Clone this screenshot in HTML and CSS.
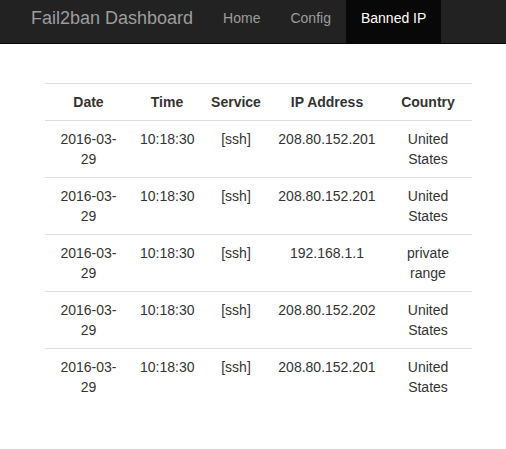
FILE: index.html
```html
<!DOCTYPE html>
<html>
<head>
<meta charset="utf-8">
<title>Fail2ban Dashboard</title>
<link rel="stylesheet" href="styles.css">
</head>
<body>
<nav class="navbar">
  <a class="brand" href="#">Fail2ban Dashboard</a>
  <ul class="nav">
    <li><a href="#">Home</a></li>
    <li><a href="#">Config</a></li>
    <li class="active"><a href="#">Banned IP</a></li>
  </ul>
</nav>
<main class="content">
  <table class="bans">
    <thead>
      <tr><th class="col-date">Date</th><th class="col-time">Time</th><th class="col-service">Service</th><th class="col-ip">IP Address</th><th class="col-country">Country</th></tr>
    </thead>
    <tbody>
      <tr><td>2016-03-29</td><td>10:18:30</td><td>[ssh]</td><td>208.80.152.201</td><td>United States</td></tr>
      <tr><td>2016-03-29</td><td>10:18:30</td><td>[ssh]</td><td>208.80.152.201</td><td>United States</td></tr>
      <tr><td>2016-03-29</td><td>10:18:30</td><td>[ssh]</td><td>192.168.1.1</td><td>private range</td></tr>
      <tr><td>2016-03-29</td><td>10:18:30</td><td>[ssh]</td><td>208.80.152.202</td><td>United States</td></tr>
      <tr><td>2016-03-29</td><td>10:18:30</td><td>[ssh]</td><td>208.80.152.201</td><td>United States</td></tr>
    </tbody>
  </table>
</main>
</body>
</html>
```
FILE: styles.css
```css
html, body {
  margin: 0;
  padding: 0;
  background: #fff;
}
body {
  font-family: "Liberation Sans", Arial, Helvetica, sans-serif;
  font-size: 14px;
  line-height: 20px;
  color: #333;
}
.navbar {
  display: flex;
  align-items: stretch;
  height: 43px;
  background: #222;
  border-bottom: 1px solid #080808;
  padding-left: 16px;
}
.brand {
  display: block;
  padding: 8px 15px 15px;
  font-size: 18px;
  line-height: 20px;
  color: #9d9d9d;
  text-decoration: none;
}
.nav {
  display: flex;
  list-style: none;
  margin: 0;
  padding: 0;
}
.nav a {
  display: block;
  padding: 8px 15px 15px;
  line-height: 20px;
  color: #9d9d9d;
  text-decoration: none;
}
.nav .active a {
  background: #080808;
  color: #fff;
}
.content {
  margin: 39px 34px 0 45px;
}
.bans {
  width: 100%;
  table-layout: fixed;
  border-collapse: collapse;
  border-spacing: 0;
}
.bans th, .bans td {
  box-sizing: border-box;
  padding: 8px;
  text-align: center;
  vertical-align: top;
  border-top: 1px solid #ddd;
}
.bans th {
  font-weight: bold;
}
.col-date { width: 87px; }
.col-time { width: 70px; }
.col-service { width: 68px; }
.col-ip { width: 114px; }
.col-country { width: 88px; }
```
